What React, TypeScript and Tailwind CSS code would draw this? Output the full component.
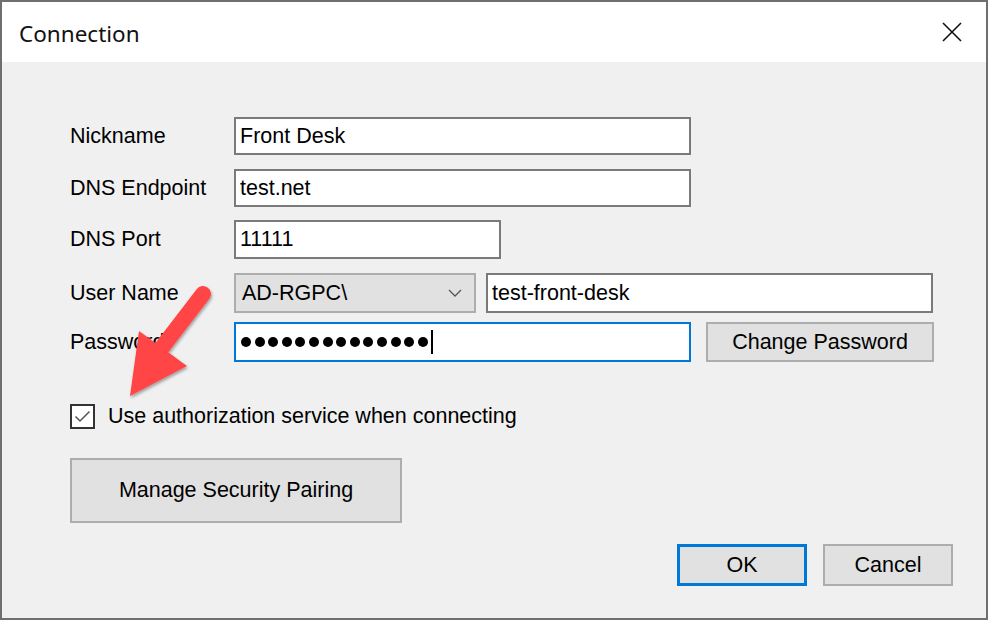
import React from "react";

const field = "h-full border-2 border-[#7a7a7a] bg-white pl-[4px] flex items-center";
const btn = "border-2 border-[#adadad] bg-[#e1e1e1] flex items-center justify-center";

function Row({ label, top, children }: { label: string; top: string; children: React.ReactNode }) {
  return (
    <div className={`flex items-center ${top}`}>
      <div className="w-[164px] shrink-0">{label}</div>
      {children}
    </div>
  );
}

export default function App() {
  const dots = Array.from({ length: 14 });
  return (
    <div
      className="relative w-[988px] h-[620px] border-2 border-[#6f6f6f] bg-[#f0f0f0] flex flex-col text-[21.5px] text-black overflow-hidden"
      style={{ fontFamily: '"Liberation Sans", Arial, sans-serif' }}
    >
      {/* title bar */}
      <div className="h-[60px] shrink-0 bg-white flex items-center justify-between pl-[17px] pr-[24px] pt-[3px]">
        <span className="text-[22.5px] text-[#111]" style={{ fontFamily: '"Noto Sans", "Open Sans", sans-serif' }}>
          Connection
        </span>
        <svg width="20" height="20" viewBox="0 0 20 20" className="-mt-[4px]">
          <path d="M1 1 L19 19 M19 1 L1 19" stroke="#111" strokeWidth="1.6" />
        </svg>
      </div>

      {/* body */}
      <div className="flex-1 flex flex-col pl-[68px]">
        <Row label="Nickname" top="mt-[55px] h-[38px]">
          <div className={`${field} w-[457px]`}>Front Desk</div>
        </Row>
        <Row label="DNS Endpoint" top="mt-[14px] h-[38px]">
          <div className={`${field} w-[457px]`}>test.net</div>
        </Row>
        <Row label="DNS Port" top="mt-[13px] h-[39px]">
          <div className={`${field} w-[267px]`}>11111</div>
        </Row>
        <Row label="User Name" top="mt-[14px] h-[40px]">
          <div className="h-full w-[242px] border-2 border-[#adadad] bg-[#e1e1e1] flex items-center justify-between pl-[6px] pr-[12px]">
            <span>AD-RGPC\</span>
            <svg width="14" height="8" viewBox="0 0 14 8">
              <path d="M1 1 L7 7 L13 1" fill="none" stroke="#555" strokeWidth="1.3" />
            </svg>
          </div>
          <div className={`${field} w-[447px] ml-[10px] h-[38px] self-start`}>test-front-desk</div>
        </Row>
        <Row label="Password" top="mt-[9px] h-[40px]">
          <div className="h-full w-[457px] border-2 border-[#0078d7] bg-white pl-[5px] flex items-center">
            <div className="flex items-center gap-[3.6px]">
              {dots.map((_, i) => (
                <span key={i} className="w-[10px] h-[10px] rounded-full bg-black" />
              ))}
            </div>
            <span className="w-[2px] h-[24px] bg-black ml-[3px]" />
          </div>
          <div className={`${btn} h-full w-[228px] ml-[15px]`}>Change Password</div>
        </Row>

        <div className="mt-[42px] flex items-center h-[25px]">
          <div className="w-[25px] h-[25px] border-2 border-[#333] bg-white flex items-center justify-center">
            <svg width="17" height="13" viewBox="0 0 17 13">
              <path d="M1.5 6.5 L6 11 L15.5 1.5" fill="none" stroke="#555" strokeWidth="1.5" />
            </svg>
          </div>
          <span className="ml-[13px]">Use authorization service when connecting</span>
        </div>

        <div className={`${btn} mt-[29px] w-[332px] h-[65px]`}>Manage Security Pairing</div>

        <div className="mt-[21px] flex justify-end pr-[33px] gap-[16px]">
          <div className="w-[130px] h-[42px] border-[3px] border-[#0078d7] bg-[#e1e1e1] flex items-center justify-center">OK</div>
          <div className={`${btn} w-[130px] h-[42px]`}>Cancel</div>
        </div>
      </div>

      {/* annotation arrow */}
      <svg className="absolute left-0 top-0 pointer-events-none" width="988" height="620" viewBox="0 0 988 620">
        <defs>
          <filter id="sh" x="-20%" y="-20%" width="140%" height="140%">
            <feDropShadow dx="1" dy="2" stdDeviation="1.5" floodColor="#000" floodOpacity="0.35" />
          </filter>
        </defs>
        <g filter="url(#sh)" fill="#ff4545">
          <path d="M201 292 L158 348" stroke="#ff4545" strokeWidth="16" strokeLinecap="round" />
          <polygon points="137,329 185,364 128,394" />
        </g>
      </svg>
    </div>
  );
}
